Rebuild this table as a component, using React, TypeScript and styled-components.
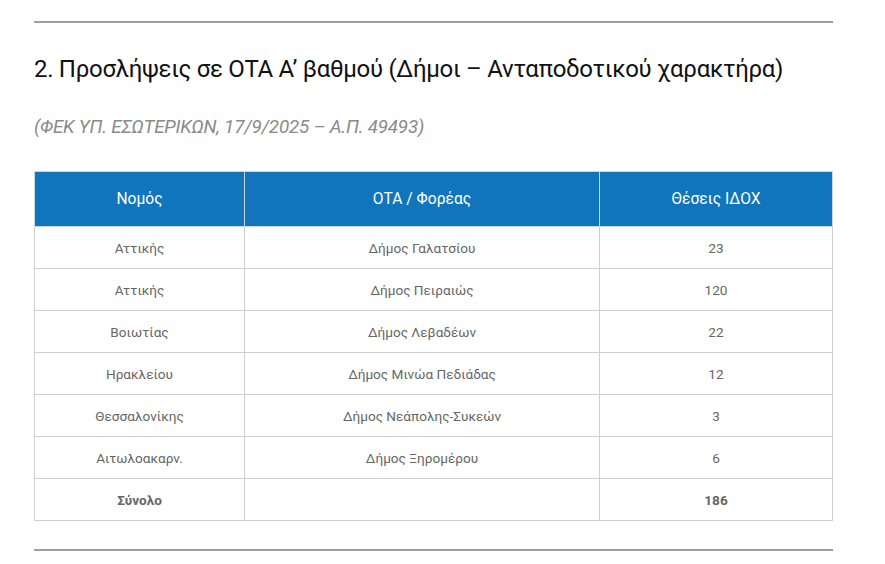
import React from "react";
import styled, { createGlobalStyle } from "styled-components";

const Global = createGlobalStyle`
  body { margin: 0; background: #fff; font-family: Roboto, "Noto Sans", sans-serif; }
`;

const Page = styled.div`
  width: 799px;
  padding: 21px 0 0 34px;
`;

const Rule = styled.hr`
  margin: 0;
  border: 0;
  border-top: 2px solid #a0a0a0;
  width: 799px;
`;

const Title = styled.h2`
  margin: 30px 0 0;
  font-size: 24px;
  line-height: 32px;
  font-weight: 400;
  letter-spacing: -0.3px;
  color: #111;
`;

const Source = styled.p`
  margin: 30px 0 0;
  font-size: 18.8px;
  line-height: 24px;
  font-style: italic;
  letter-spacing: -0.2px;
  color: #8a8a8a;
`;

const Table = styled.table`
  margin: 32px 0 28px;
  width: 797px;
  border-collapse: collapse;
  table-layout: fixed;
  font-size: 13.6px;
`;

const Th = styled.th<{ $w: number }>`
  width: ${(p) => p.$w}px;
  height: 54px;
  padding: 0;
  background: #1175bd;
  color: #fff;
  font-weight: 400;
  font-size: 15.6px;
  border: 1px solid #c9d7e3;
  text-align: center;
`;

const Td = styled.td<{ $bold?: boolean }>`
  height: 41px;
  padding: 0;
  text-align: center;
  color: #666;
  font-weight: ${(p) => (p.$bold ? 700 : 400)};
  border: 1px solid #cfcfcf;
`;

const rows: [string, string, string][] = [
  ["Αττικής", "Δήμος Γαλατσίου", "23"],
  ["Αττικής", "Δήμος Πειραιώς", "120"],
  ["Βοιωτίας", "Δήμος Λεβαδέων", "22"],
  ["Ηρακλείου", "Δήμος Μινώα Πεδιάδας", "12"],
  ["Θεσσαλονίκης", "Δήμος Νεάπολης-Συκεών", "3"],
  ["Αιτωλοακαρν.", "Δήμος Ξηρομέρου", "6"],
];

export default function App() {
  return (
    <Page>
      <Global />
      <Rule />
      <Title>2. Προσλήψεις σε ΟΤΑ Α’ βαθμού (Δήμοι – Ανταποδοτικού χαρακτήρα)</Title>
      <Source>(ΦΕΚ ΥΠ. ΕΣΩΤΕΡΙΚΩΝ, 17/9/2025 – Α.Π. 49493)</Source>
      <Table>
        <thead>
          <tr>
            <Th $w={209}>Νομός</Th>
            <Th $w={354}>ΟΤΑ / Φορέας</Th>
            <Th $w={232}>Θέσεις ΙΔΟΧ</Th>
          </tr>
        </thead>
        <tbody>
          {rows.map((r, i) => (
            <tr key={i}>
              <Td>{r[0]}</Td>
              <Td>{r[1]}</Td>
              <Td>{r[2]}</Td>
            </tr>
          ))}
          <tr>
            <Td $bold>Σύνολο</Td>
            <Td></Td>
            <Td $bold>186</Td>
          </tr>
        </tbody>
      </Table>
      <Rule />
    </Page>
  );
}
